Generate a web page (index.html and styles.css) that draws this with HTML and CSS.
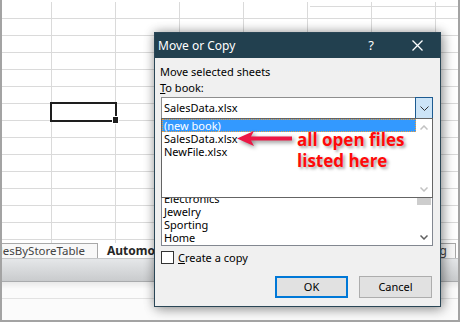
FILE: index.html
```html
<!DOCTYPE html>
<html>
<head>
<meta charset="utf-8">
<link rel="stylesheet" href="styles.css">
</head>
<body>
<div class="screen">
  <div class="topshade"></div>
  <div class="grid">
    <div class="selection"><span class="handle"></span></div>
  </div>
  <div class="tabs">
    <div class="tab inactive first">SalesByStoreTable</div>
    <div class="tab active">Automotive</div>
    <div class="tabfill"></div>
    <div class="tab inactive last">Sporting</div>
  </div>
  <div class="statusbar"></div>
  <div class="lower"></div>

  <div class="dialog">
    <div class="titlebar">
      <span class="title">Move or Copy</span>
      <span class="tbtn help">?</span>
      <span class="tbtn close"><svg width="11" height="11" viewBox="0 0 11 11"><path d="M0.5 0.5L10.5 10.5M10.5 0.5L0.5 10.5" stroke="#fff" stroke-width="1.3" fill="none"/></svg></span>
    </div>
    <div class="body">
      <div class="label">Move selected sheets</div>
      <div class="label gap"><u>T</u>o book:</div>
      <div class="combo">
        <span class="combo-text">SalesData.xlsx</span>
        <span class="combo-btn"><svg width="9" height="5" viewBox="0 0 9 5"><path d="M0.5 0.5L4.5 4.5L8.5 0.5" stroke="#333" stroke-width="1" fill="none"/></svg></span>
        <div class="dropdown">
          <div class="items">
            <div class="item selected">(new book)</div>
            <div class="item">SalesData.xlsx</div>
            <div class="item">NewFile.xlsx</div>
          </div>
          <div class="scroll">
            <span class="sarrow"><svg width="8" height="5" viewBox="0 0 8 5"><path d="M0.5 4.5L4 1L7.5 4.5" stroke="#c2c2c2" stroke-width="1.5" fill="none"/></svg></span>
            <span class="strack"></span>
            <span class="sarrow"><svg width="8" height="5" viewBox="0 0 8 5"><path d="M0.5 0.5L4 4L7.5 0.5" stroke="#c2c2c2" stroke-width="1.5" fill="none"/></svg></span>
          </div>
        </div>
      </div>
      <div class="list">
        <div class="items sheets">
          <div class="item">Electronics</div>
          <div class="item">Jewelry</div>
          <div class="item">Sporting</div>
          <div class="item">Home</div>
        </div>
        <div class="scroll">
          <span class="sarrow"><svg width="8" height="5" viewBox="0 0 8 5"><path d="M0.5 4.5L4 1L7.5 4.5" stroke="#606060" stroke-width="1.5" fill="none"/></svg></span>
          <span class="thumb"></span>
          <span class="strack"></span>
          <span class="sarrow"><svg width="8" height="5" viewBox="0 0 8 5"><path d="M0.5 0.5L4 4L7.5 0.5" stroke="#606060" stroke-width="1.5" fill="none"/></svg></span>
        </div>
      </div>
      <div class="check"><span class="box"></span><span class="check-text"><u>C</u>reate a copy</span></div>
      <div class="buttons">
        <div class="btn default">OK</div>
        <div class="btn">Cancel</div>
      </div>
    </div>
  </div>

  <svg class="arrow" width="58" height="17" viewBox="0 0 58 17"><polygon points="1,8.5 18,1 15,6.5 56,6.5 56,10.5 15,10.5 18,16" fill="#ec1745"/></svg>
  <div class="note">all open files<br>listed here</div>
</div>
</body>
</html>
```

FILE: styles.css
```css
* { box-sizing: border-box; }
html, body { margin: 0; padding: 0; }
body {
  width: 460px;
  height: 322px;
  overflow: hidden;
  background: #fff;
  font-family: "Noto Sans", "DejaVu Sans", sans-serif;
}
.screen {
  position: relative;
  width: 460px;
  height: 322px;
  border: 2px solid #a3a3a3;
  border-top: 0;
  overflow: hidden;
  display: flex;
  flex-direction: column;
  background: #fff;
}
.topshade {
  position: absolute;
  left: 68px;
  top: -30px;
  width: 235px;
  height: 30px;
  background: #fff;
  box-shadow: 0 2px 14px rgba(0, 0, 0, 0.4);
}
.grid {
  position: relative;
  flex: none;
  height: 243px;
  border-top: 2px solid #fff;
  background-color: #fff;
  background-image:
    linear-gradient(to right, #dadada 1px, transparent 1px),
    linear-gradient(to bottom, #dadada 1px, transparent 1px);
  background-size: 64px 100%, 100% 17px;
  background-position: 49px 0, 0 16px;
}
.grid::before {
  content: "";
  position: absolute;
  top: 4px;
  left: 308px;
  right: 0;
  height: 1px;
  background: #dadada;
}
.selection {
  position: absolute;
  left: 48px;
  top: 100px;
  width: 67px;
  height: 20px;
  border: 2px solid #1e1e1e;
}
.handle {
  position: absolute;
  left: 61px;
  top: 13px;
  width: 5px;
  height: 6px;
  background: #1e1e1e;
  outline: 1px solid #fff;
}
.tabs {
  flex: none;
  display: flex;
  height: 15px;
  background: #fff;
  font-size: 12px;
  overflow: hidden;
}
.tab {
  flex: none;
  white-space: nowrap;
  line-height: 14px;
}
.tab.inactive {
  background: #f8f8f8;
  border-top: 1px solid #a8a8a8;
  border-right: 1px solid #a8a8a8;
  color: #444;
}
.tab.first {
  margin-left: -19px;
  width: 115px;
  padding-left: 4px;
  font-size: 11.5px;
}
.tab.active {
  padding: 1px 20px 0 9px;
  font-weight: 700;
  color: #262626;
}
.tabfill { flex: 1; }
.tab.last {
  margin-right: 2px;
  padding: 0 8px 0 6px;
}
.statusbar {
  flex: none;
  height: 24px;
  border-top: 1px solid #c4c6c8;
  border-bottom: 1px solid #a9abad;
  background: linear-gradient(#e5e7e9, #c9cbcd);
}
.lower {
  flex: 1;
  background:
    linear-gradient(to bottom, transparent 16px, #e2e2e2 16px, #e2e2e2 17px, transparent 17px),
    linear-gradient(to bottom, rgba(0, 0, 0, 0.07), rgba(0, 0, 0, 0) 7px),
    #fbfbfb;
}

/* dialog */
.dialog {
  position: absolute;
  left: 152px;
  top: 32px;
  width: 287px;
  height: 275px;
  border: 1px solid #2a4656;
  background: #f0f0f0;
  box-shadow: 0 0 10px rgba(0, 0, 0, 0.3), 3px 3px 12px rgba(0, 0, 0, 0.25);
  display: flex;
  flex-direction: column;
  font-size: 11px;
  color: #000;
  z-index: 2;
}
.titlebar {
  flex: none;
  height: 25px;
  background: #22404f;
  display: flex;
  align-items: center;
  color: #fff;
}
.title {
  flex: 1;
  padding-left: 3px;
  padding-bottom: 1px;
  font-size: 12px;
}
.tbtn {
  width: 46px;
  height: 25px;
  display: flex;
  align-items: center;
  justify-content: center;
}
.help {
  font-size: 13px;
  padding-bottom: 1px;
}
.body {
  padding: 7px 7px 0 6px;
  display: flex;
  flex-direction: column;
}
.label {
  height: 13px;
  line-height: 13px;
  margin-left: -1px;
  white-space: nowrap;
}
.label.gap { margin-top: 3px; }
.combo {
  position: relative;
  margin-top: 3px;
  height: 22px;
  border: 1px solid #8e8e8e;
  background: #fff;
  display: flex;
}
.combo-text {
  flex: 1;
  padding: 3px 0 0 2px;
  line-height: 13px;
}
.combo-btn {
  width: 18px;
  height: 22px;
  margin: -1px -1px -1px 0;
  border: 1px solid #1d5b91;
  background: #cce4f7;
  display: flex;
  align-items: center;
  justify-content: center;
}
.dropdown {
  position: absolute;
  left: -1px;
  top: 20px;
  width: 272px;
  height: 80px;
  border: 1px solid #646464;
  background: #fff;
  display: flex;
  z-index: 3;
}
.items {
  flex: 1;
  display: flex;
  flex-direction: column;
}
.items.sheets { padding-top: 52px; }
.item {
  height: 13px;
  line-height: 13px;
  padding-left: 2px;
  white-space: nowrap;
}
.item.selected {
  background: #3399ff;
  color: #fff;
  outline: 1px dotted #f0a13a;
  outline-offset: -1px;
}
.scroll {
  width: 16px;
  flex: none;
  display: flex;
  flex-direction: column;
  background: #fff;
}
.sarrow {
  width: 16px;
  height: 16px;
  flex: none;
  display: flex;
  align-items: center;
  justify-content: center;
}
.strack { flex: 1; }
.thumb {
  flex: none;
  height: 49px;
  margin: 0 1px;
  background: #cdcdcd;
}
.list {
  margin-top: 20px;
  height: 107px;
  border: 1px solid #828790;
  background: #fff;
  display: flex;
}
.check {
  margin-top: 5px;
  height: 13px;
  display: flex;
  align-items: center;
}
.box {
  width: 13px;
  height: 13px;
  border: 1px solid #333;
  background: #fff;
  flex: none;
}
.check-text {
  margin-left: 4px;
  line-height: 13px;
}
.buttons {
  margin-top: 12px;
  margin-right: 1px;
  display: flex;
  justify-content: flex-end;
  gap: 11px;
}
.btn {
  width: 73px;
  height: 22px;
  border: 1px solid #adadad;
  background: #e1e1e1;
  text-align: center;
  line-height: 20px;
}
.btn.default {
  border: 2px solid #0078d7;
  line-height: 18px;
}

/* callout */
.arrow {
  position: absolute;
  left: 234px;
  top: 130px;
  z-index: 4;
  filter: drop-shadow(2px 2px 2px rgba(0, 0, 0, 0.45));
}
.note {
  position: absolute;
  left: 295px;
  top: 129px;
  z-index: 4;
  font-family: "Open Sans", "Noto Sans", sans-serif;
  font-weight: 700;
  font-size: 17px;
  line-height: 21px;
  color: #ff0a0a;
  text-shadow: 2px 2px 3px rgba(0, 0, 0, 0.35);
  white-space: nowrap;
}
```
